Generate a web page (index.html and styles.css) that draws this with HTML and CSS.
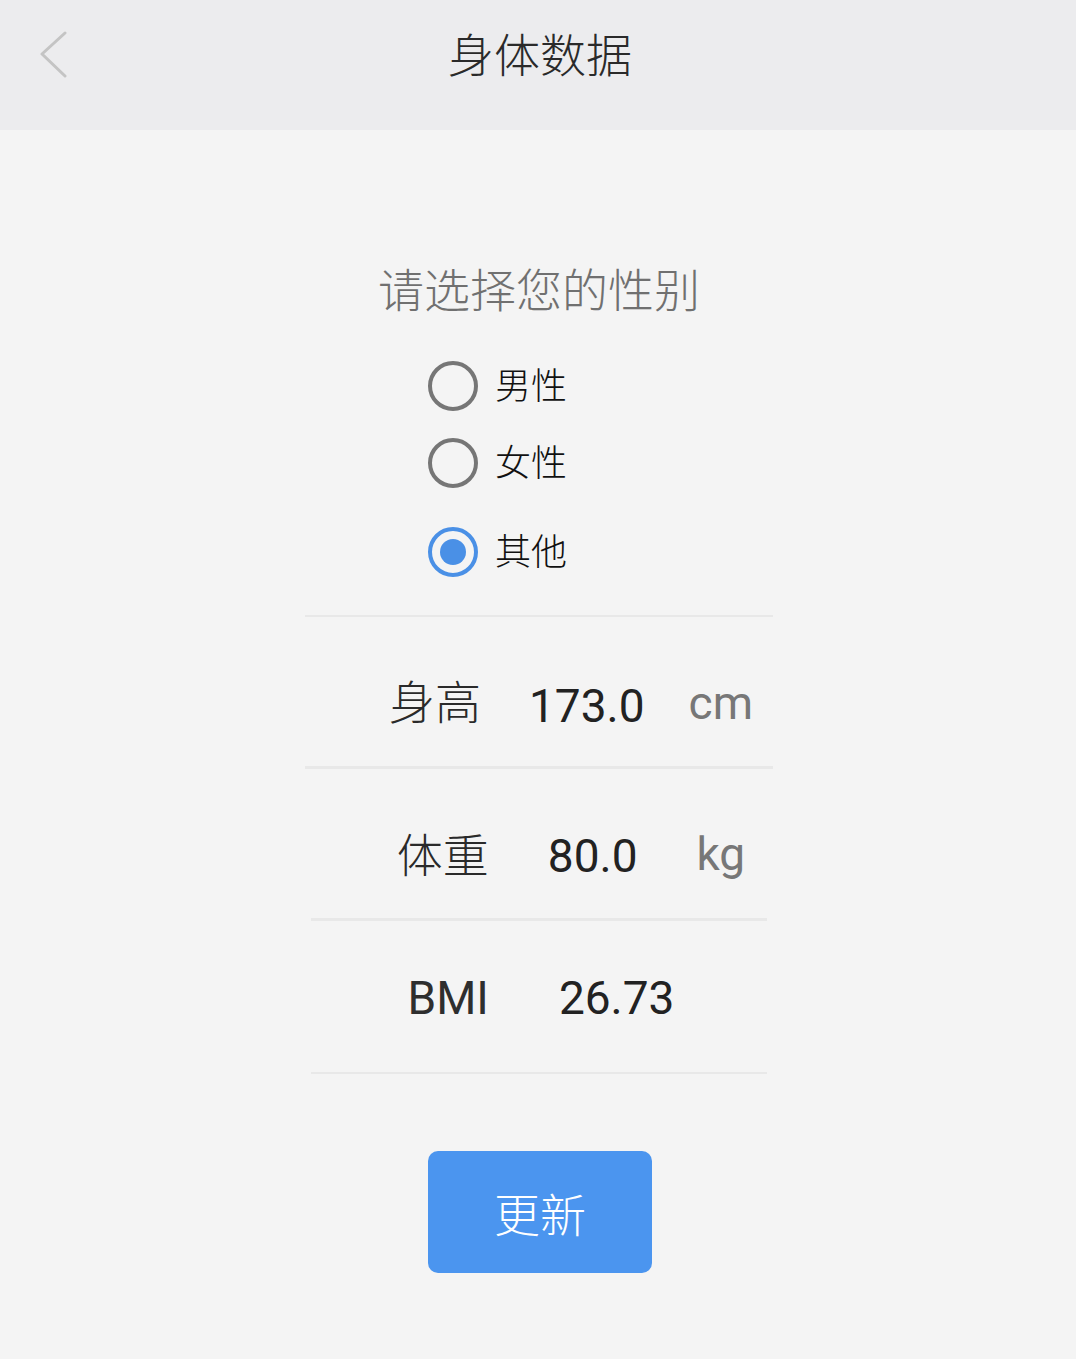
FILE: index.html
```html
<!DOCTYPE html>
<html lang="zh-CN">
<head>
<meta charset="utf-8">
<title>身体数据</title>
<link rel="stylesheet" href="styles.css">
</head>
<body>
<header class="topbar">
  <div class="topbar-side">
    <svg class="back-icon" width="30" height="48" viewBox="0 0 30 48" aria-hidden="true">
      <polyline points="26,2 3,23 26,45" fill="none" stroke="#c4c4c4" stroke-width="3" stroke-linecap="round" stroke-linejoin="round"/>
    </svg>
  </div>
  <h1 class="topbar-title">身体数据</h1>
  <div class="topbar-side"></div>
</header>

<main class="content">
  <h2 class="prompt">请选择您的性别</h2>

  <div class="radio-group">
    <div class="radio-row">
      <span class="radio"></span>
      <span class="radio-label">男性</span>
    </div>
    <div class="radio-row">
      <span class="radio"></span>
      <span class="radio-label">女性</span>
    </div>
    <div class="radio-row radio-row-last">
      <span class="radio radio-checked"><span class="radio-dot"></span></span>
      <span class="radio-label">其他</span>
    </div>
  </div>

  <div class="divider divider-wide divider-thin"></div>

  <div class="data-row data-row-height">
    <span class="data-label">身高</span>
    <span class="data-value">173.0</span>
    <span class="data-unit">cm</span>
  </div>

  <div class="divider divider-wide divider-thick"></div>

  <div class="data-row data-row-weight">
    <span class="data-label">体重</span>
    <span class="data-value">80.0</span>
    <span class="data-unit">kg</span>
  </div>

  <div class="divider divider-narrow divider-thick"></div>

  <div class="data-row data-row-bmi">
    <span class="data-label data-label-latin">BMI</span>
    <span class="data-value">26.73</span>
  </div>

  <div class="divider divider-narrow divider-thin"></div>

  <button class="update-btn" type="button">更新</button>
</main>
</body>
</html>
```

FILE: styles.css
```css
* {
  box-sizing: border-box;
}

html, body {
  margin: 0;
  padding: 0;
}

body {
  background: #f4f4f4;
  font-family: Roboto, "Noto Sans CJK SC", "Noto Sans", sans-serif;
  color: #222;
  min-height: 1359px;
}

.topbar {
  height: 130px;
  background: #ececee;
  display: grid;
  grid-template-columns: 1fr auto 1fr;
  align-items: center;
}

.topbar-side {
  display: flex;
  align-items: center;
}

.back-icon {
  margin-left: 39px;
  margin-top: -20px;
}

.topbar-title {
  margin: 0;
  margin-top: -17px;
  margin-left: 4px;
  font-size: 46px;
  font-weight: 300;
  color: #2a2a2a;
  line-height: 1.2;
}

.content {
  display: flex;
  flex-direction: column;
  align-items: center;
}

.prompt {
  margin: 134px 0 0;
  font-size: 46px;
  font-weight: 300;
  color: #707070;
  line-height: 1.2;
  padding-left: 2px;
}

.radio-group {
  align-self: flex-start;
  margin-left: 428px;
  margin-top: 28px;
  display: flex;
  flex-direction: column;
}

.radio-row {
  height: 77px;
  display: flex;
  align-items: center;
  gap: 17px;
}

.radio-row-last {
  margin-top: 12px;
}

.radio {
  width: 50px;
  height: 50px;
  border-radius: 50%;
  border: 4px solid #767676;
  display: flex;
  align-items: center;
  justify-content: center;
}

.radio-checked {
  border-color: #4a90e6;
}

.radio-dot {
  width: 26px;
  height: 26px;
  border-radius: 50%;
  background: #4a90e6;
}

.radio-label {
  font-size: 36px;
  font-weight: 300;
  color: #111;
  line-height: 1;
  margin-top: 2px;
}

.divider {
  background: #e8e8e8;
}

.divider-wide {
  width: 468px;
  margin-left: 2px;
}

.divider-narrow {
  width: 456px;
  margin-left: 2px;
}

.divider-thin {
  height: 2px;
}

.divider-thick {
  height: 3px;
}

.radio-group + .divider {
  margin-top: 25px;
}

.data-row {
  height: 149px;
  display: flex;
  align-items: center;
  justify-content: center;
}

.data-row-height {
  padding-top: 24px;
  padding-left: 66px;
  gap: 48px;
}

.data-row-weight {
  padding-top: 26px;
  padding-left: 66px;
  gap: 59px;
}

.data-row-bmi {
  height: 151px;
  padding-top: 4px;
  padding-left: 6px;
  gap: 70px;
}

.data-label {
  font-size: 46px;
  font-weight: 300;
  color: #2a2a2a;
  line-height: 1.2;
}

.data-label-latin {
  font-weight: 400;
  color: #2e2e2e;
}

.data-value {
  font-size: 46px;
  color: #222;
  line-height: 1.2;
}

.data-row-height .data-value {
  margin-top: 6px;
}

.data-unit {
  font-size: 46px;
  color: #777;
  line-height: 1.2;
}

.data-row-height .data-unit {
  margin-left: -4px;
}

.data-row-weight .data-unit {
  margin-top: -4px;
}

.update-btn {
  margin-top: 77px;
  margin-left: 4px;
  width: 224px;
  height: 122px;
  border: none;
  border-radius: 10px;
  background: #4b95ef;
  color: #fff;
  font-family: "Noto Sans CJK SC", sans-serif;
  font-size: 46px;
  font-weight: 300;
  padding: 0;
  line-height: 1;
}
```
